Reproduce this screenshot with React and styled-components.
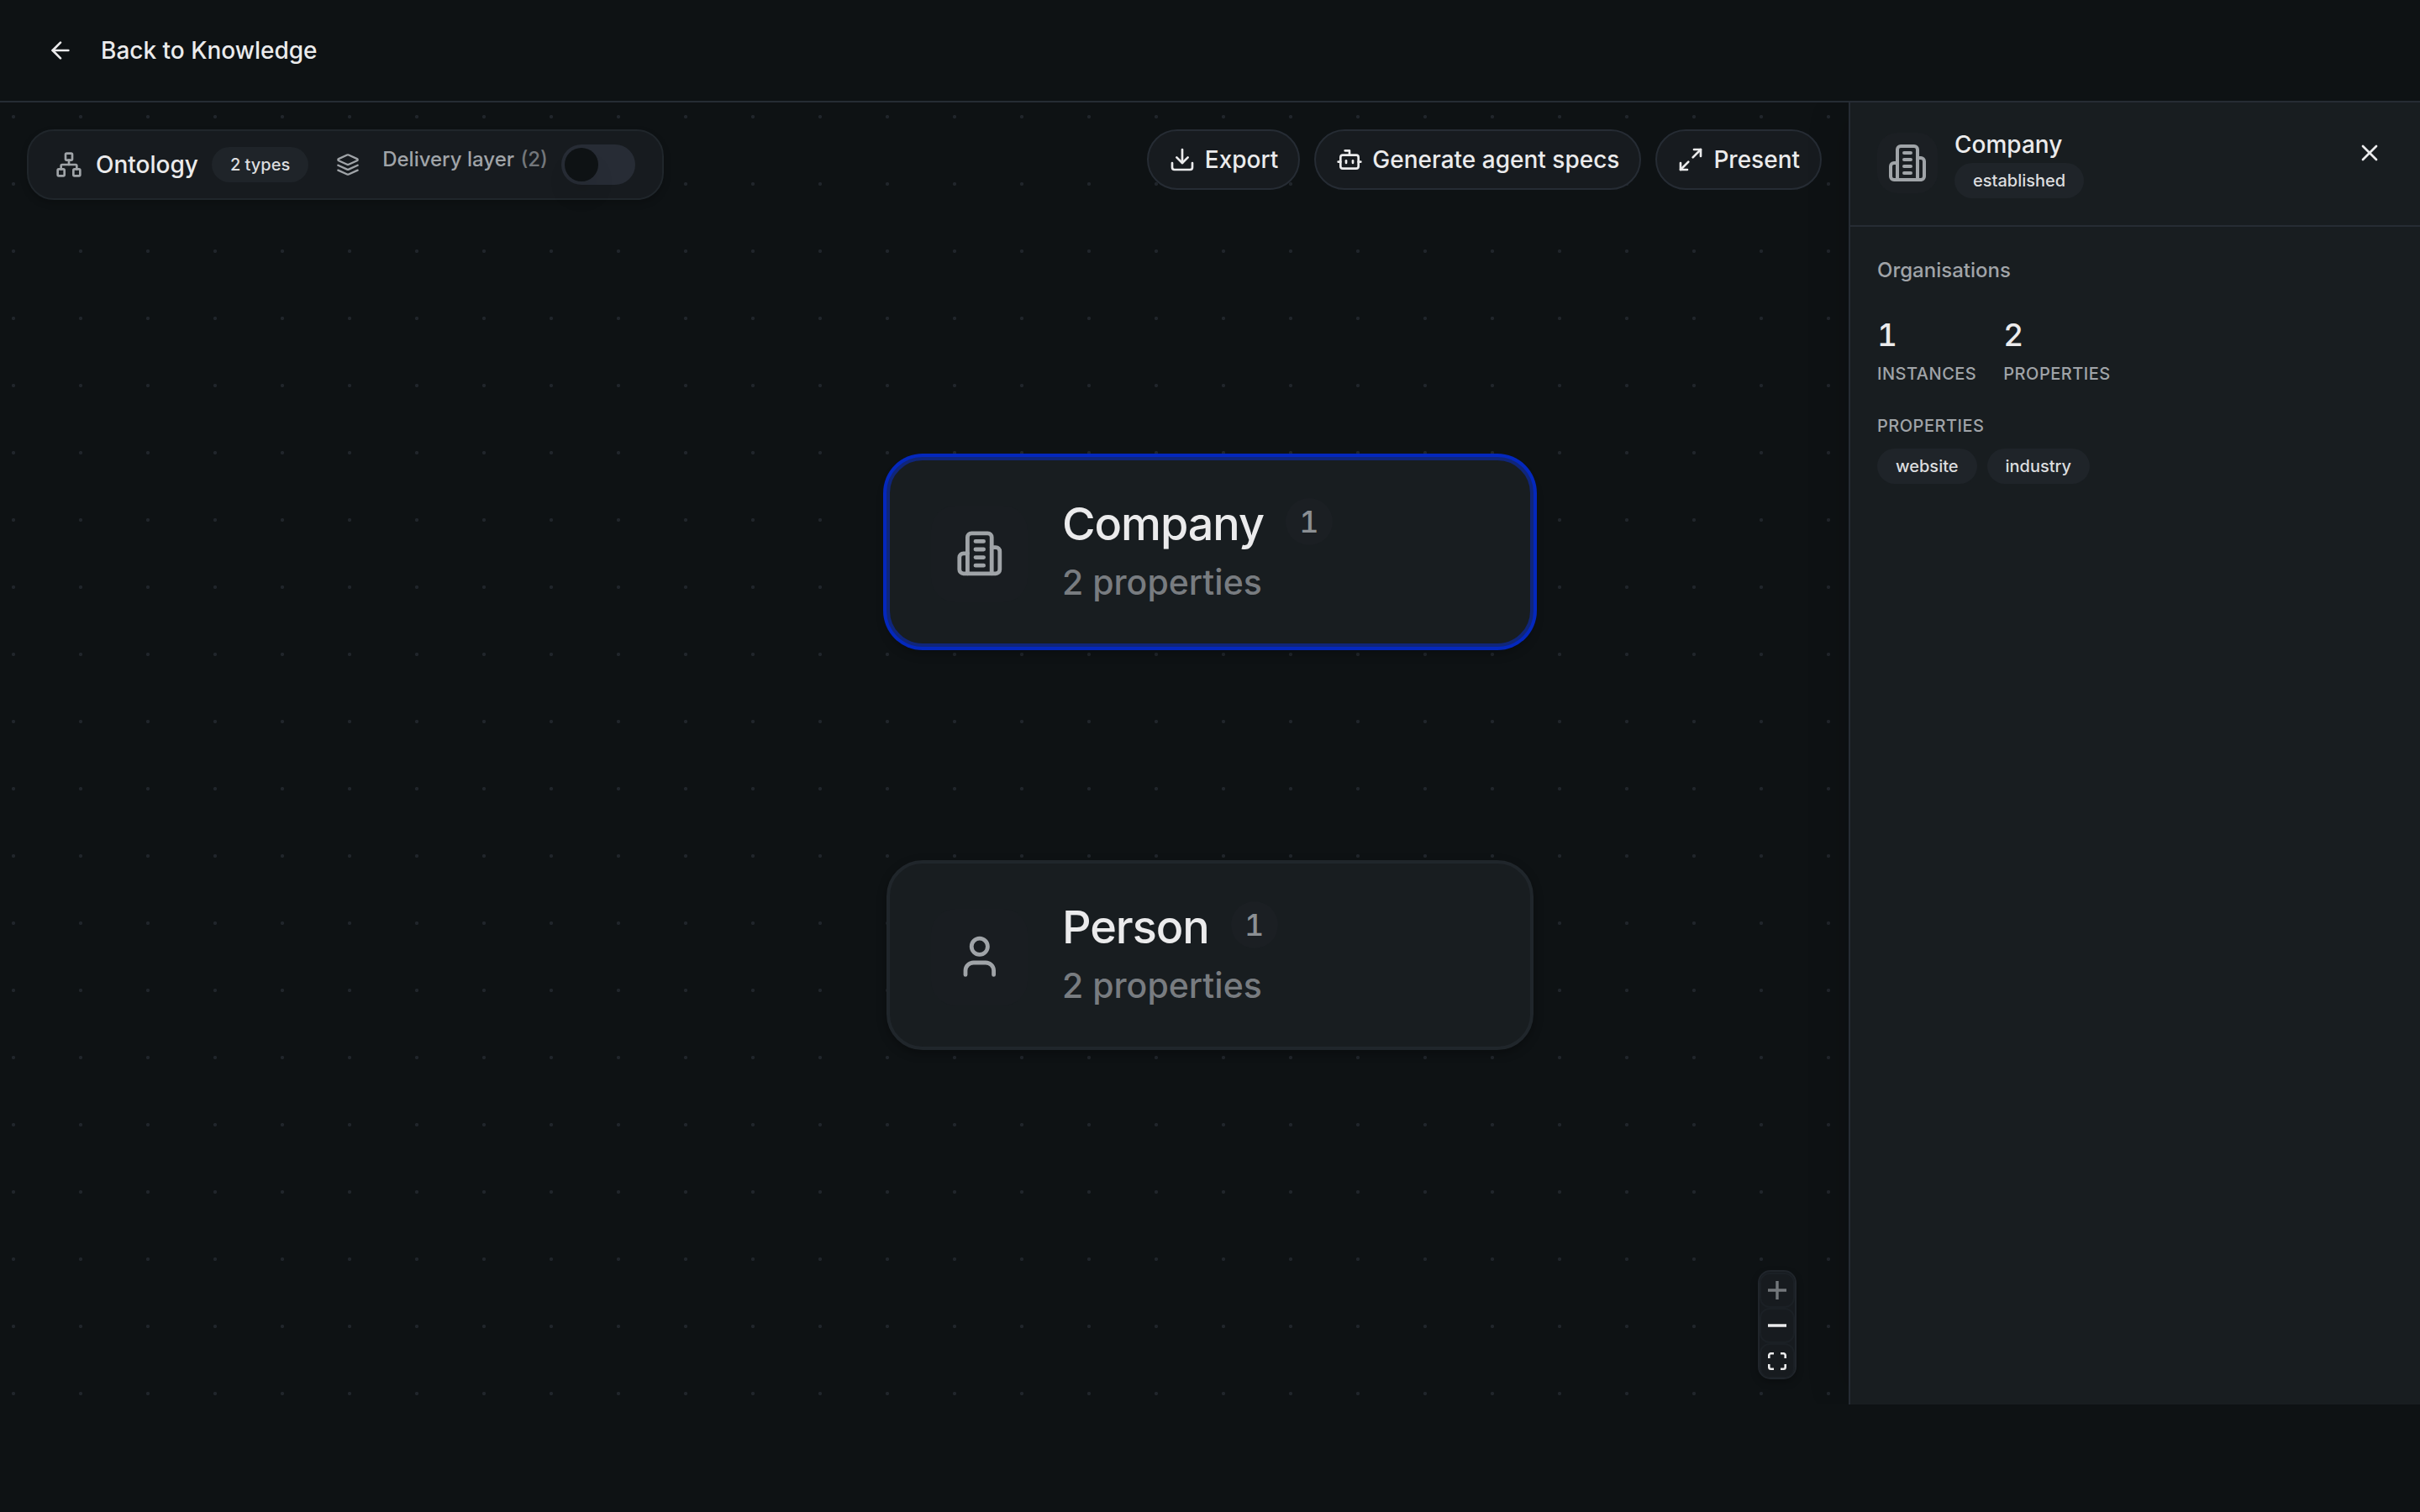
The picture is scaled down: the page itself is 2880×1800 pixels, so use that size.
import React from "react";
import styled, { createGlobalStyle } from "styled-components";
import { ArrowLeft, Bot, Download, Maximize2, Network, User, X } from "lucide-react";

const GlobalStyle = createGlobalStyle`
  * {
    box-sizing: border-box;
  }

  body {
    margin: 0;
    background: #0e1214;
    color: #ebebec;
    font-family: Inter, "Liberation Sans", sans-serif;
    font-weight: 500;
    -webkit-font-smoothing: antialiased;
  }
`;

const Page = styled.div`
  display: flex;
  flex-direction: column;
  height: 1800px;
`;

const TopBar = styled.header`
  display: flex;
  align-items: center;
  gap: 32px;
  flex: none;
  height: 122px;
  padding: 0 56px;
  border-bottom: 2px solid #262c34;
  font-size: 28px;
`;

const Workspace = styled.main`
  display: flex;
  flex: none;
  height: 1550px;
`;

const Canvas = styled.section`
  position: relative;
  display: flex;
  flex-direction: column;
  flex: 1;
  padding: 32px;
  background-image: radial-gradient(circle, #20252b 1.9px, transparent 2.3px);
  background-size: 80px 80px;
  background-position: -24px -23px;
`;

const CanvasBar = styled.div`
  display: flex;
  align-items: flex-start;
  justify-content: space-between;
`;

const Summary = styled.div`
  display: flex;
  align-items: center;
  height: 84px;
  padding: 0 32px;
  border: 2px solid #20262b;
  border-radius: 32px;
  background: #171b1f;
  box-shadow: 0 4px 8px rgba(0, 0, 0, 0.2);
  color: #a0a4a8;
`;

const SummaryTitle = styled.span`
  margin: 0 16px;
  color: #ebebec;
  font-size: 28px;
`;

const Badge = styled.span`
  display: flex;
  align-items: center;
  width: fit-content;
  height: 42px;
  padding: 0 22px;
  border-radius: 21px;
  background: #1f2429;
  color: #dcdddf;
  font-size: 20px;
`;

const LayerToggle = styled.div`
  display: flex;
  align-items: center;
  margin-left: 33px;
`;

const LayerLabel = styled.span`
  margin: 0 16px 13px 27px;
  font-size: 24px;
`;

const LayerCount = styled.span`
  margin-left: 1px;
  color: #73777b;
`;

const Switch = styled.div`
  width: 88px;
  height: 48px;
  padding: 4px;
  border-radius: 24px;
  background: #272c35;
`;

const Thumb = styled.div`
  width: 40px;
  height: 40px;
  border-radius: 50%;
  background: #0e1214;
  box-shadow: 0 20px 30px -6px rgba(0, 0, 0, 0.12);
`;

const Actions = styled.div`
  display: flex;
  gap: 17px;
`;

const ActionButton = styled.button`
  display: flex;
  align-items: center;
  gap: 11px;
  height: 72px;
  padding: 0 24px;
  border: 2px solid #262c34;
  border-radius: 36px;
  background: #171b1f;
  color: #ebebec;
  font: inherit;
  font-size: 28px;
`;

/* Graph nodes are placed freely on the canvas */
const Node = styled.article`
  position: absolute;
  left: 1055px;
  top: ${(props) => props.$top}px;
  display: flex;
  align-items: center;
  gap: 41px;
  width: 770px;
  height: 226px;
  padding: 4px 49px 0;
  border: 4px solid ${(props) => (props.$selected ? "#10267a" : "#20262b")};
  border-radius: 43px;
  background: #181d20;
  box-shadow: ${(props) =>
    props.$selected
      ? "0 0 0 4px #0428bd, 0 8px 12px rgba(0, 0, 0, 0.25)"
      : "0 4px 12px rgba(0, 0, 0, 0.3)"};
`;

const NodeIcon = styled.div`
  display: grid;
  place-items: center;
  width: 115px;
  height: 115px;
  border-radius: 29px;
  background: #191d21;
  color: #a0a4a8;
`;

const NodeText = styled.div`
  padding-bottom: 2px;
`;

const NodeName = styled.div`
  display: flex;
  align-items: center;
  gap: 26px;
  height: 65px;
  font-size: 54px;
  letter-spacing: -0.02em;
`;

const NodeCount = styled.span`
  display: grid;
  place-items: center;
  width: 56px;
  height: 56px;
  margin-bottom: 5px;
  border-radius: 50%;
  background: #1b1f23;
  color: #8b8f93;
  font-size: 36px;
  font-variant-numeric: tabular-nums;
  letter-spacing: 0;
`;

const NodeMeta = styled.div`
  margin-top: 5px;
  color: #787c80;
  font-size: 41px;
  line-height: 65px;
`;

const Controls = styled.div`
  position: absolute;
  right: 62px;
  bottom: 30px;
  width: 46px;
  height: 130px;
  padding-top: 1px;
  border: 2px solid #20252b;
  border-radius: 15px;
  overflow: hidden;
  background: #171b1f;
  box-shadow: 0 4px 8px rgba(0, 0, 0, 0.25);
`;

const ControlButton = styled.button`
  display: grid;
  place-items: center;
  width: 42px;
  height: 42px;
  padding: 0;
  border: 2px solid #1b2025;
  border-radius: 12px;
  background: #171b1f;
  color: ${(props) => (props.disabled ? "#73777b" : "#ebebec")};
`;

const Panel = styled.aside`
  width: 680px;
  border-left: 2px solid #262c34;
  background: #181d20;
  box-shadow: -20px 0 40px -10px rgba(0, 0, 0, 0.12);
  clip-path: inset(0 0 0 -60px);
  z-index: 1;
`;

const PanelHeader = styled.div`
  display: flex;
  align-items: flex-start;
  height: 148px;
  padding: 32px;
  border-bottom: 2px solid #262c34;
`;

const PanelIcon = styled.div`
  display: grid;
  place-items: center;
  width: 72px;
  height: 72px;
  margin-top: 4px;
  border-radius: 24px;
  background: #1b1f23;
  color: #a0a4a8;
`;

const PanelTitle = styled.div`
  flex: 1;
  margin-left: 20px;
`;

const PanelName = styled.div`
  margin-bottom: 3px;
  font-size: 28px;
  line-height: 37px;
`;

const CloseButton = styled.button`
  display: grid;
  place-items: center;
  width: 56px;
  height: 56px;
  padding: 0;
  border: 0;
  background: none;
  color: #ebebec;
`;

const PanelBody = styled.div`
  padding: 32px;
`;

const Description = styled.p`
  margin: 0 0 32px;
  color: #a0a4a8;
  font-size: 24px;
  line-height: 39px;
`;

const Stats = styled.div`
  display: flex;
  gap: 32px;
`;

const StatValue = styled.div`
  margin-bottom: 5px;
  font-size: 37px;
  font-variant-numeric: tabular-nums;
  line-height: 52px;
`;

const Caption = styled.div`
  color: #a0a4a8;
  font-size: 20px;
  line-height: 30px;
  letter-spacing: 0.5px;
  text-transform: uppercase;
`;

const TagGroup = styled.div`
  margin-top: 32px;
`;

const Tags = styled.div`
  display: flex;
  gap: 12px;
  margin-top: 12px;
`;

const Line = ({ size, children }) => (
  <svg
    width={size}
    height={size}
    viewBox="0 0 24 24"
    fill="none"
    stroke="currentColor"
    strokeWidth="2"
    strokeLinecap="round"
    strokeLinejoin="round"
  >
    {children}
  </svg>
);

const BuildingIcon = ({ size }) => (
  <Line size={size}>
    <path d="M6 22V4a2 2 0 0 1 2-2h8a2 2 0 0 1 2 2v18Z" />
    <path d="M6 12H4a2 2 0 0 0-2 2v6a2 2 0 0 0 2 2h2" />
    <path d="M18 9h2a2 2 0 0 1 2 2v9a2 2 0 0 1-2 2h-2" />
    <path d="M10 6h4M10 10h4M10 14h4M10 18h4" />
  </Line>
);

const LayersIcon = ({ size }) => (
  <Line size={size}>
    <path d="m12.83 2.18a2 2 0 0 0-1.66 0L2.6 6.08a1 1 0 0 0 0 1.83l8.58 3.91a2 2 0 0 0 1.66 0l8.58-3.9a1 1 0 0 0 0-1.83Z" />
    <path d="m22 17.65-9.17 4.16a2 2 0 0 1-1.66 0L2 17.65" />
    <path d="m22 12.65-9.17 4.16a2 2 0 0 1-1.66 0L2 12.65" />
  </Line>
);

const PlusIcon = () => (
  <svg width="22" height="22" viewBox="0 0 22 22" fill="currentColor">
    <path d="M9.3 0h3.4v9.3H22v3.4h-9.3V22H9.3v-9.3H0V9.3h9.3z" />
  </svg>
);

const MinusIcon = () => (
  <svg width="22" height="4" viewBox="0 0 22 4" fill="currentColor">
    <path d="M0 .3h22v3.4H0z" />
  </svg>
);

const FitIcon = () => (
  <svg width="22" height="21" viewBox="0 0 22 21" fill="none" stroke="currentColor" strokeWidth="2.6">
    <path d="M7 1.3H3.5a2.2 2.2 0 0 0-2.2 2.2V7M15 1.3h3.5a2.2 2.2 0 0 1 2.2 2.2V7M7 19.7H3.5a2.2 2.2 0 0 1-2.2-2.2V14M15 19.7h3.5a2.2 2.2 0 0 0 2.2-2.2V14" />
  </svg>
);

const nodes = [
  { name: "Company", count: 1, top: 422, selected: true, icon: <BuildingIcon size={57.6} /> },
  { name: "Person", count: 1, top: 902, selected: false, icon: <User size={57.6} /> },
];

const App = () => {
  return (
    <Page>
      <GlobalStyle />
      <TopBar>
        <ArrowLeft size={32} />
        Back to Knowledge
      </TopBar>
      <Workspace>
        <Canvas>
          <CanvasBar>
            <Summary>
              <Network size={32} />
              <SummaryTitle>Ontology</SummaryTitle>
              <Badge>2 types</Badge>
              <LayerToggle>
                <LayersIcon size={28} />
                <LayerLabel>
                  Delivery layer <LayerCount>(2)</LayerCount>
                </LayerLabel>
                <Switch>
                  <Thumb />
                </Switch>
              </LayerToggle>
            </Summary>
            <Actions>
              <ActionButton>
                <Download size={32} />
                Export
              </ActionButton>
              <ActionButton>
                <Bot size={32} />
                Generate agent specs
              </ActionButton>
              <ActionButton>
                <Maximize2 size={32} />
                Present
              </ActionButton>
            </Actions>
          </CanvasBar>
          {nodes.map((node) => (
            <Node key={node.name} $top={node.top} $selected={node.selected}>
              <NodeIcon>{node.icon}</NodeIcon>
              <NodeText>
                <NodeName>
                  {node.name}
                  <NodeCount>{node.count}</NodeCount>
                </NodeName>
                <NodeMeta>2 properties</NodeMeta>
              </NodeText>
            </Node>
          ))}
          <Controls>
            <ControlButton disabled>
              <PlusIcon />
            </ControlButton>
            <ControlButton>
              <MinusIcon />
            </ControlButton>
            <ControlButton>
              <FitIcon />
            </ControlButton>
          </Controls>
        </Canvas>
        <Panel>
          <PanelHeader>
            <PanelIcon>
              <BuildingIcon size={48} />
            </PanelIcon>
            <PanelTitle>
              <PanelName>Company</PanelName>
              <Badge>established</Badge>
            </PanelTitle>
            <CloseButton>
              <X size={32} />
            </CloseButton>
          </PanelHeader>
          <PanelBody>
            <Description>Organisations</Description>
            <Stats>
              <div>
                <StatValue>1</StatValue>
                <Caption>Instances</Caption>
              </div>
              <div>
                <StatValue>2</StatValue>
                <Caption>Properties</Caption>
              </div>
            </Stats>
            <TagGroup>
              <Caption>Properties</Caption>
              <Tags>
                <Badge>website</Badge>
                <Badge>industry</Badge>
              </Tags>
            </TagGroup>
          </PanelBody>
        </Panel>
      </Workspace>
    </Page>
  );
};

export default App;
